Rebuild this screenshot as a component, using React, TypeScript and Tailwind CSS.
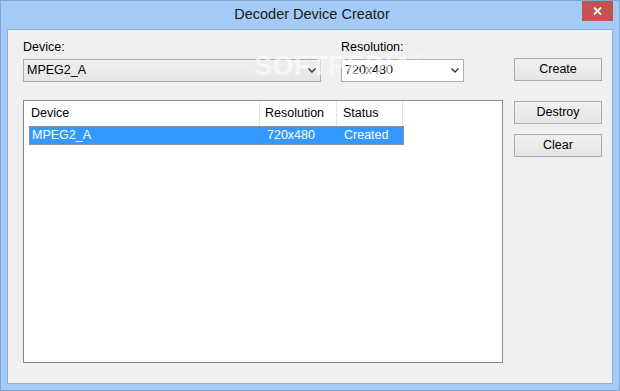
import React from "react";

const font = { fontFamily: '"Liberation Sans", Arial, sans-serif' };

const Chevron = () => (
  <svg width="8" height="5" viewBox="0 0 8 5" className="shrink-0">
    <polyline points="0.5,0.5 4,4 7.5,0.5" fill="none" stroke="#333" strokeWidth="1.4" />
  </svg>
);

const Button = ({ label, className = "" }: { label: string; className?: string }) => (
  <button
    className={`w-[88px] h-[23px] border border-[#acacac] bg-gradient-to-b from-[#f0f0f0] to-[#e5e5e5] text-[12.5px] text-black leading-none ${className}`}
  >
    {label}
  </button>
);

export default function App() {
  return (
    <div
      style={font}
      className="relative w-[620px] h-[391px] flex flex-col bg-[#a3cbf5] border border-[#7fa7d4] overflow-hidden"
    >
      {/* title bar */}
      <div className="h-[28px] flex items-center justify-center">
        <span className="text-[14.5px] text-[#1a1a1a] leading-none pb-[2px] pl-[4px]">Decoder Device Creator</span>
      </div>
      <div className="absolute top-0 right-[6px] w-[31px] h-[20px] bg-[#c75050] flex items-center justify-center">
        <svg width="9" height="8" viewBox="0 0 9 8">
          <path d="M1 0.5 L8 7.5 M8 0.5 L1 7.5" stroke="#fff" strokeWidth="1.8" />
        </svg>
      </div>

      {/* client area */}
      <div className="flex-1 mx-[6px] mb-[6px] border border-[#8eaed3] bg-[#f0f0f0] flex">
        <div className="pl-[15px] pt-[10px] flex flex-col">
          <div className="flex gap-[20px]">
            <div className="flex flex-col">
              <span className="text-[12.5px] leading-[15px] text-black">Device:</span>
              <div className="mt-[4px] w-[298px] h-[23px] border border-[#acacac] bg-gradient-to-b from-[#efefef] to-[#e6e6e6] flex items-center pl-[3px] pr-[4px]">
                <span className="flex-1 text-[12.5px] text-black">MPEG2_A</span>
                <Chevron />
              </div>
            </div>
            <div className="flex flex-col">
              <span className="text-[12.5px] leading-[15px] text-black">Resolution:</span>
              <div className="mt-[4px] w-[123px] h-[23px] border border-[#acacac] bg-white flex items-center pl-[3px] pr-[4px]">
                <span className="flex-1 text-[12.5px] text-black">720x480</span>
                <Chevron />
              </div>
            </div>
          </div>

          {/* list view */}
          <div className="mt-[18px] w-[480px] h-[263px] border border-[#828790] bg-white flex flex-col">
            <div className="h-[25px] flex text-[12.5px] text-black">
              <div className="w-[236px] pl-[7px] flex items-center border-r border-[#e5e5e5]">Device</div>
              <div className="w-[77px] pl-[5px] flex items-center border-r border-[#e5e5e5]">Resolution</div>
              <div className="w-[66px] pl-[6px] flex items-center border-r border-[#e5e5e5]">Status</div>
            </div>
            <div className="ml-[5px] w-[375px] h-[19px] bg-[#3399ff] border border-dotted border-[#e2883a] flex items-center text-[12.5px] text-white">
              <div className="w-[231px] pl-[2px]">MPEG2_A</div>
              <div className="w-[77px] pl-[6px]">720x480</div>
              <div className="pl-[6px]">Created</div>
            </div>
          </div>
        </div>

        <div className="ml-[11px] pt-[28px] flex flex-col">
          <Button label="Create" />
          <Button label="Destroy" className="mt-[20px]" />
          <Button label="Clear" className="mt-[10px]" />
        </div>
      </div>

      {/* watermark */}
      <div className="absolute left-[253px] top-[52px] flex items-start pointer-events-none">
        <span className="text-[27px] font-bold leading-none tracking-[0.5px] text-white/60">SOFTPEDIA</span>
        <span className="text-[9px] leading-none text-white/60 ml-[2px]">®</span>
      </div>
    </div>
  );
}
